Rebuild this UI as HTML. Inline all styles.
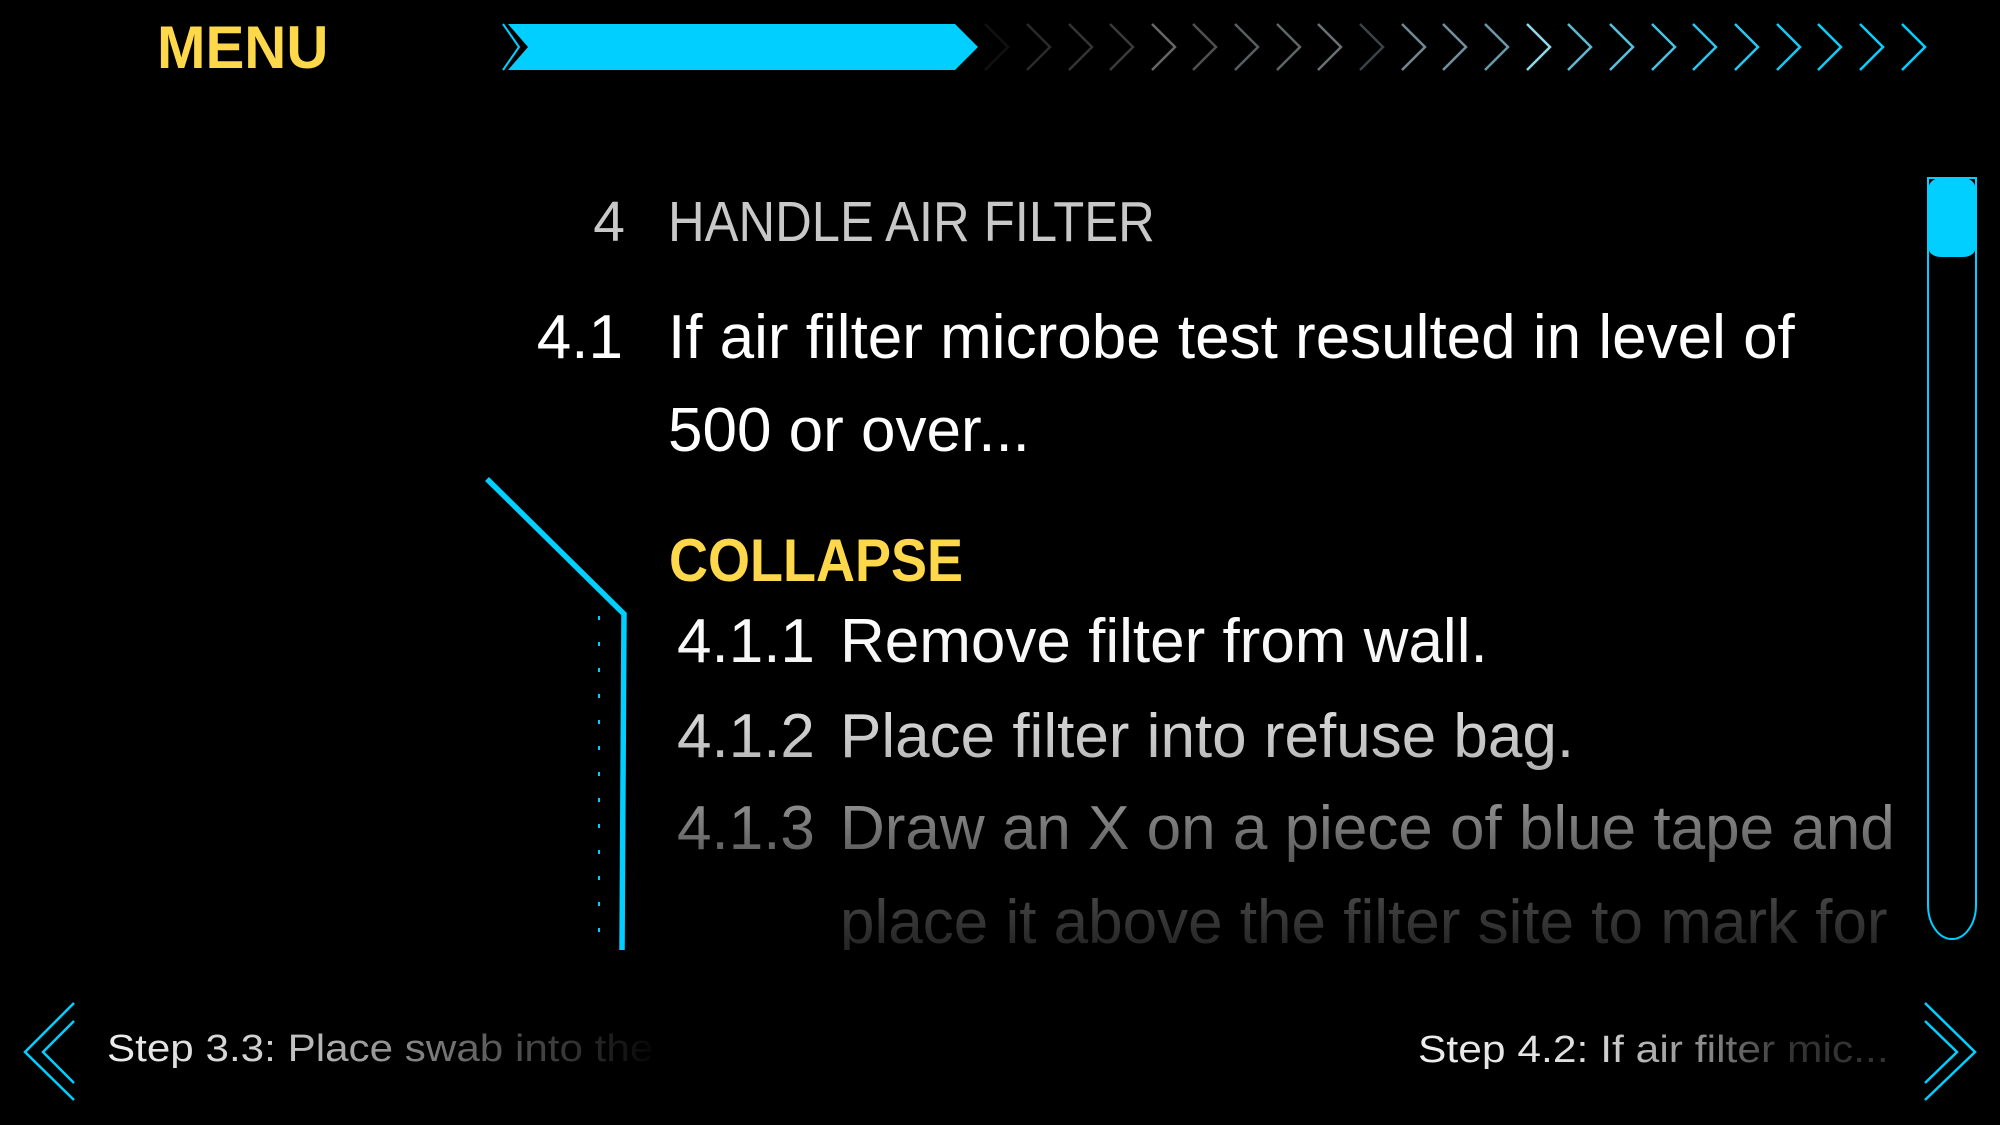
<!DOCTYPE html>
<html><head><meta charset="utf-8"><style>
html,body{margin:0;padding:0;background:#000;width:2000px;height:1125px;overflow:hidden}
body{position:relative;font-family:"Liberation Sans",sans-serif}
.a{position:absolute;white-space:nowrap;line-height:1}
.fade{position:absolute;left:640px;top:600px;width:1300px;height:350px;overflow:hidden;color:#fff;
-webkit-mask-image:linear-gradient(to bottom,#000 0,rgba(0,0,0,.96) 60px,rgba(0,0,0,.76) 150px,rgba(0,0,0,.38) 250px,rgba(0,0,0,.15) 345px);
mask-image:linear-gradient(to bottom,#000 0,rgba(0,0,0,.96) 60px,rgba(0,0,0,.76) 150px,rgba(0,0,0,.38) 250px,rgba(0,0,0,.15) 345px)}
</style></head><body>
<svg width="2000" height="1125" style="position:absolute;left:0;top:0">
  <polyline points="503,24 519,47 503,70" fill="none" stroke="#00cfff" stroke-width="2"/>
  <polygon points="508,24 955,24 978,47 955,70 508,70 528,47" fill="#00cfff"/>
  <g fill="none" stroke-width="2.5">
    <polyline points="985,24 1008,47 985,70" stroke="#111"/>
    <polyline points="1027,24 1050,47 1027,70" stroke="#2a2a2a"/>
    <polyline points="1069,24 1092,47 1069,70" stroke="#333"/>
    <polyline points="1110,24 1133,47 1110,70" stroke="#3a3a3a"/>
    <polyline points="1152,24 1175,47 1152,70" stroke="#666"/>
    <polyline points="1193,24 1216,47 1193,70" stroke="#505050"/>
    <polyline points="1235,24 1258,47 1235,70" stroke="#595e60"/>
    <polyline points="1277,24 1300,47 1277,70" stroke="#5e6668"/>
    <polyline points="1318,24 1341,47 1318,70" stroke="#687074"/>
    <polyline points="1360,24 1383,47 1360,70" stroke="#3a4448"/>
    <polyline points="1402,24 1425,47 1402,70" stroke="#708890"/>
    <polyline points="1443,24 1466,47 1443,70" stroke="#7090a0"/>
    <polyline points="1485,24 1508,47 1485,70" stroke="#6a98a8"/>
    <polyline points="1527,24 1550,47 1527,70" stroke="#90d8e8"/>
    <polyline points="1568,24 1591,47 1568,70" stroke="#60b8d0"/>
    <polyline points="1610,24 1633,47 1610,70" stroke="#58c0dc"/>
    <polyline points="1652,24 1675,47 1652,70" stroke="#48c0e0"/>
    <polyline points="1693,24 1716,47 1693,70" stroke="#30c4ec"/>
    <polyline points="1735,24 1758,47 1735,70" stroke="#28c8f0"/>
    <polyline points="1777,24 1800,47 1777,70" stroke="#18c8f4"/>
    <polyline points="1818,24 1841,47 1818,70" stroke="#10ccf8"/>
    <polyline points="1860,24 1883,47 1860,70" stroke="#08cefc"/>
    <polyline points="1902,24 1925,47 1902,70" stroke="#00cfff"/>
  </g>
  <polyline points="487,479 624,614 622,950" fill="none" stroke="#00cfff" stroke-width="5.5"/>
  <line x1="599" y1="616" x2="599" y2="950" stroke="#00cfff" stroke-width="2" stroke-dasharray="4 22"/>
  <path d="M1928,178 H1976 V905 A24,34 0 0 1 1928,905 Z" fill="none" stroke="#00cfff" stroke-width="2"/>
  <path d="M1928,192 Q1928,178 1942,178 H1962 Q1976,178 1976,192 V245 Q1976,257 1962,257 H1942 Q1928,257 1928,245 Z" fill="#00cfff"/>
  <g fill="none" stroke="#00cfff" stroke-width="2.5">
    <polyline points="74,1003 25,1052 74,1100"/>
    <polyline points="74,1021 43,1052 74,1083"/>
    <polyline points="1925,1003 1975,1052 1925,1100"/>
    <polyline points="1925,1021 1957,1052 1925,1083"/>
  </g>
</svg>
<div class="a" style="left:157px;top:18px;font-size:60px;font-weight:bold;color:#fcd84a;transform:scaleX(0.97);transform-origin:left">MENU</div>
<div class="a" style="left:540px;top:194px;width:85px;text-align:right;font-size:57px;color:#c8c8c8">4</div>
<div class="a" style="left:668px;top:194px;font-size:57px;color:#c8c8c8;transform:scaleX(0.89);transform-origin:left">HANDLE AIR FILTER</div>
<div class="a" style="left:500px;top:307px;width:123px;text-align:right;font-size:62px;color:#fff">4.1</div>
<div class="a" style="left:668px;top:307px;font-size:62px;color:#fff">If air filter microbe test resulted in level of</div>
<div class="a" style="left:668px;top:400px;font-size:62px;color:#fff">500 or over...</div>
<div class="a" style="left:669px;top:531px;font-size:60px;font-weight:bold;color:#fcd84a;transform:scaleX(0.9);transform-origin:left">COLLAPSE</div>
<div class="fade">
  <div class="a" style="left:37px;top:11px;font-size:62px">4.1.1</div>
  <div class="a" style="left:200px;top:11px;font-size:62px">Remove filter from wall.</div>
  <div class="a" style="left:37px;top:106px;font-size:62px">4.1.2</div>
  <div class="a" style="left:200px;top:106px;font-size:62px">Place filter into refuse bag.</div>
  <div class="a" style="left:37px;top:198px;font-size:62px">4.1.3</div>
  <div class="a" style="left:200px;top:198px;font-size:62px">Draw an X on a piece of blue tape and</div>
  <div class="a" style="left:200px;top:292px;font-size:62px">place it above the filter site to mark for</div>
</div>
<div class="a" style="left:107px;top:1030px;font-size:38px;transform:scaleX(1.11);transform-origin:left;background:linear-gradient(to right,#eee 0,#ccc 150px,#777 300px,#333 420px,#000 500px);-webkit-background-clip:text;background-clip:text;color:transparent">Step 3.3: Place swab into the</div>
<div class="a" style="left:1418px;top:1031px;font-size:38px;transform:scaleX(1.12);transform-origin:left;background:linear-gradient(to right,#eee 0,#ddd 150px,#888 260px,#333 330px);-webkit-background-clip:text;background-clip:text;color:transparent">Step 4.2: If air filter mic...</div>
</body></html>
